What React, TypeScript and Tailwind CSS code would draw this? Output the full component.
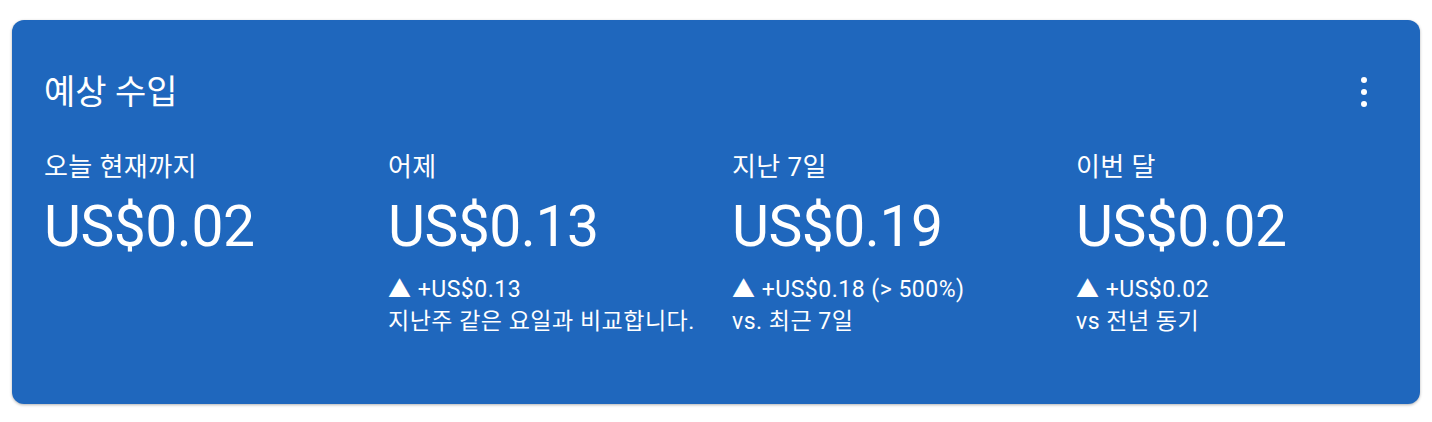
import React from "react";

type Stat = {
  label: string;
  amount: string;
  change?: string;
  note?: string;
};

const stats: Stat[] = [
  { label: "오늘 현재까지", amount: "US$0.02" },
  { label: "어제", amount: "US$0.13", change: "▲ +US$0.13", note: "지난주 같은 요일과 비교합니다." },
  { label: "지난 7일", amount: "US$0.19", change: "▲ +US$0.18 (> 500%)", note: "vs. 최근 7일" },
  { label: "이번 달", amount: "US$0.02", change: "▲ +US$0.02", note: "vs 전년 동기" },
];

const font = { fontFamily: "Roboto, 'Noto Sans CJK KR', sans-serif" };

export default function App() {
  return (
    <div className="min-h-[422px] bg-white px-3 pt-5" style={font}>
      <div className="rounded-xl bg-[#1f67bd] pb-[66px] pl-8 pr-10 pt-[52px] text-white shadow-[0_1px_3px_rgba(0,0,0,0.3)]">
        <div className="flex h-10 items-center justify-between">
          <h1 className="text-[34px] leading-10 font-normal">예상 수입</h1>
          <button className="flex h-8 w-8 flex-col items-center justify-center gap-[6px]" type="button">
            <span className="h-[6px] w-[6px] rounded-full bg-white" />
            <span className="h-[6px] w-[6px] rounded-full bg-white" />
            <span className="h-[6px] w-[6px] rounded-full bg-white" />
          </button>
        </div>

        <div className="mt-[39px] grid grid-cols-[344px_344px_344px_1fr]">
          {stats.map((s) => (
            <div key={s.label}>
              <p className="text-[26px] leading-8 tracking-[0.4px]">{s.label}</p>
              <p className="mt-[14px] text-[57px] leading-[60px] tracking-[-0.5px]">{s.amount}</p>
              {s.change && (
                <div className="mt-[17px] text-[23px] leading-8 tracking-[0.5px]">
                  <p>{s.change}</p>
                  <p>{s.note}</p>
                </div>
              )}
            </div>
          ))}
        </div>
      </div>
    </div>
  );
}
